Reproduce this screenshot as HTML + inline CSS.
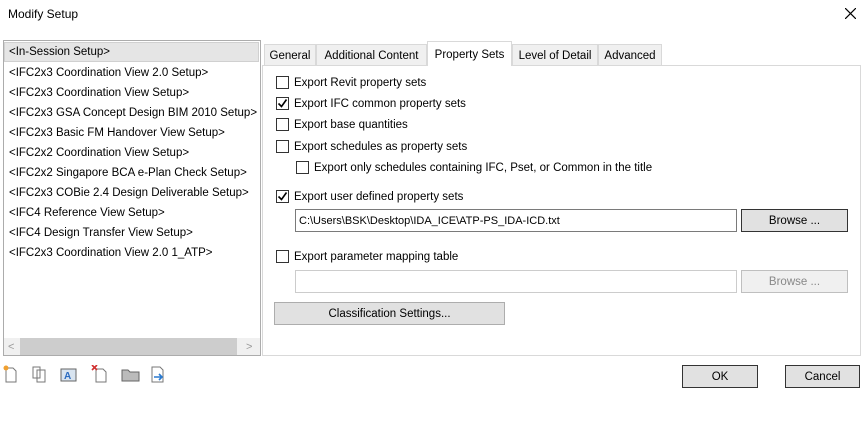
<!DOCTYPE html>
<html><head><style>
*{box-sizing:border-box}
body{margin:0;width:867px;height:438px;background:#fff;font-family:"Liberation Sans",sans-serif;font-size:11.5px;line-height:16px;color:#000;position:relative;overflow:hidden}
.a{position:absolute;white-space:nowrap}
.cb{position:absolute;width:13px;height:13px;border:1px solid #333;background:#fff}
.cb svg{position:absolute;left:0px;top:0px}
.btn{position:absolute;background:#e1e1e1;border:1px solid #adadad;text-align:center}
.tab{position:absolute;top:44px;height:22px;background:#f0f0f0;border:1px solid #d9d9d9;padding-top:3px;text-align:center}
.li{position:absolute;left:9px}
</style></head><body>
<div class="a" style="left:8px;top:6px;font-size:12px">Modify Setup</div>
<svg class="a" style="left:845px;top:8px" width="11" height="11"><path d="M0 0L11 11M11 0L0 11" stroke="#000" stroke-width="1.2"/></svg>

<div class="a" style="left:3px;top:40px;width:258px;height:316px;border:1px solid #acacac"></div>
<div class="a" style="left:4px;top:42px;width:255px;height:20px;background:#e5e5e5;border:1px solid #d0d0d0"></div>
<div class="li a" style="top:44px">&lt;In-Session Setup&gt;</div>
<div class="li a" style="top:65px">&lt;IFC2x3 Coordination View 2.0 Setup&gt;</div>
<div class="li a" style="top:85px">&lt;IFC2x3 Coordination View Setup&gt;</div>
<div class="li a" style="top:105px">&lt;IFC2x3 GSA Concept Design BIM 2010 Setup&gt;</div>
<div class="li a" style="top:125px">&lt;IFC2x3 Basic FM Handover View Setup&gt;</div>
<div class="li a" style="top:145px">&lt;IFC2x2 Coordination View Setup&gt;</div>
<div class="li a" style="top:165px">&lt;IFC2x2 Singapore BCA e-Plan Check Setup&gt;</div>
<div class="li a" style="top:185px">&lt;IFC2x3 COBie 2.4 Design Deliverable Setup&gt;</div>
<div class="li a" style="top:205px">&lt;IFC4 Reference View Setup&gt;</div>
<div class="li a" style="top:225px">&lt;IFC4 Design Transfer View Setup&gt;</div>
<div class="li a" style="top:245px">&lt;IFC2x3 Coordination View 2.0 1_ATP&gt;</div>
<div class="a" style="left:4px;top:338px;width:256px;height:17px;background:#f0f0f0"></div>
<div class="a" style="left:20px;top:338px;width:217px;height:17px;background:#cdcdcd"></div>
<div class="a" style="left:8px;top:339px;color:#999;font-size:11px">&lt;</div>
<div class="a" style="left:246px;top:339px;color:#999;font-size:11px">&gt;</div>

<svg class="a" style="left:2px;top:365px" width="170" height="18">
<path d="M4 3h7l3 3v11H4z" fill="#fff" stroke="#777"/><circle cx="4" cy="3" r="2.5" fill="#f0a030"/>
<path d="M31 2h7v11h-7z M35 5h8v12h-8z" fill="#fff" stroke="#777"/>
<rect x="59" y="4" width="15" height="12" fill="#d8e4f0" stroke="#666"/><text x="62" y="14" font-size="10" fill="#2a6ac0" font-family="Liberation Sans" font-weight="bold">A</text>
<path d="M94 4h7l3 3v10h-10z" fill="#fff" stroke="#777"/><path d="M90 0l5 5M95 0l-5 5" stroke="#d03030" stroke-width="1.6"/>
<path d="M120 5h6l2 2h9v9h-17z" fill="#bbb" stroke="#666"/>
<path d="M150 2h8l3 3v12h-11z" fill="#fff" stroke="#777"/><path d="M152 12h8M157 9l3 3-3 3" stroke="#2a7ad0" stroke-width="1.6" fill="none"/>
</svg>

<div class="a" style="left:262px;top:65px;width:599px;height:291px;border:1px solid #d9d9d9"></div>
<div class="tab" style="left:264px;width:52px">General</div>
<div class="tab" style="left:316px;width:111px">Additional Content</div>
<div class="tab" style="left:512px;width:86px">Level of Detail</div>
<div class="tab" style="left:598px;width:64px">Advanced</div>
<div class="a" style="left:427px;top:41px;width:85px;height:25px;background:#fff;border:1px solid #d9d9d9;border-bottom:none;padding-top:5px;text-align:center">Property Sets</div>

<div class="cb" style="left:276px;top:76px"></div><div class="a" style="left:294px;top:75px">Export Revit property sets</div>
<div class="cb" style="left:276px;top:97px"><svg width="11" height="11"><path d="M1.5 5.5l3 3 5-7" stroke="#000" stroke-width="1.6" fill="none"/></svg></div><div class="a" style="left:294px;top:96px">Export IFC common property sets</div>
<div class="cb" style="left:276px;top:118px"></div><div class="a" style="left:294px;top:117px">Export base quantities</div>
<div class="cb" style="left:276px;top:140px"></div><div class="a" style="left:294px;top:139px">Export schedules as property sets</div>
<div class="cb" style="left:296px;top:161px"></div><div class="a" style="left:314px;top:160px">Export only schedules containing IFC, Pset, or Common in the title</div>
<div class="cb" style="left:276px;top:190px"><svg width="11" height="11"><path d="M1.5 5.5l3 3 5-7" stroke="#000" stroke-width="1.6" fill="none"/></svg></div><div class="a" style="left:294px;top:189px">Export user defined property sets</div>
<div class="a" style="left:295px;top:209px;width:442px;height:23px;border:1px solid #7a7a7a;padding:3px 0 0 3px;font-size:11px">C:\Users\BSK\Desktop\IDA_ICE\ATP-PS_IDA-ICD.txt</div>
<div class="btn" style="left:741px;top:209px;width:107px;height:23px;padding-top:3px;border-color:#333">Browse ...</div>
<div class="cb" style="left:276px;top:250px"></div><div class="a" style="left:294px;top:249px">Export parameter mapping table</div>
<div class="a" style="left:295px;top:270px;width:442px;height:23px;border:1px solid #ccc"></div>
<div class="btn" style="left:741px;top:270px;width:107px;height:23px;padding-top:3px;background:#f0f0f0;border-color:#bfbfbf;color:#888">Browse ...</div>
<div class="btn" style="left:274px;top:302px;width:231px;height:23px;padding-top:3px">Classification Settings...</div>

<div class="btn" style="left:682px;top:365px;width:76px;height:23px;padding-top:3px;border-color:#333">OK</div>
<div class="btn" style="left:785px;top:365px;width:75px;height:23px;padding-top:3px;border-color:#333">Cancel</div>
</body></html>
